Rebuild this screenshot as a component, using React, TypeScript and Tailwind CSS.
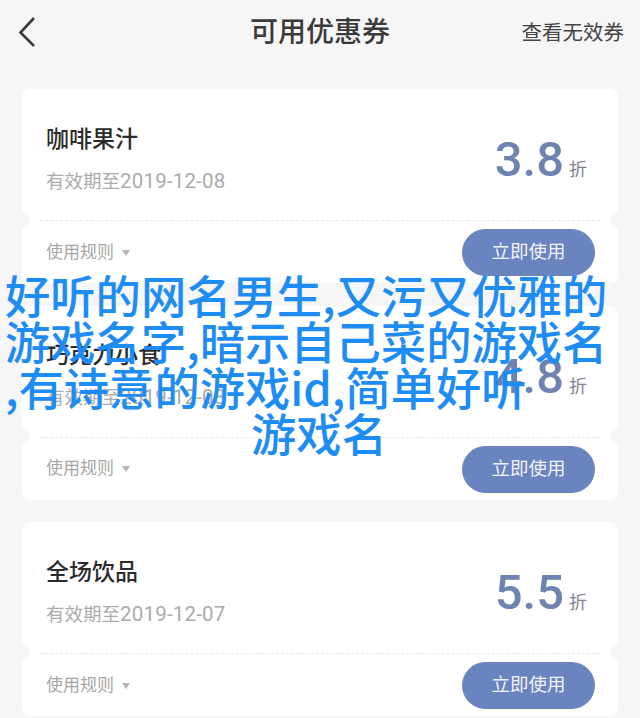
const FONT = "font-['Roboto','Noto_Sans_CJK_SC',sans-serif]";

const coupons = [
  { name: "咖啡果汁", date: "2019-12-08", discount: "3.8" },
  { name: "巧克力小食", date: "2019-12-08", discount: "4.8" },
  { name: "全场饮品", date: "2019-12-07", discount: "5.5" },
];

const CouponCard = ({ coupon }: { coupon: (typeof coupons)[number] }) => (
  <div className="relative h-[194px] rounded-lg bg-white">
    <div className="flex h-[131px] items-center justify-between pl-6 pr-[31px] pt-[10px]">
      <div>
        <div className="text-[23px] font-medium leading-[30px] text-[#2b2b2b]">{coupon.name}</div>
        <div className="mt-[13px] flex items-baseline text-[18.500px] leading-[26px] text-[#ababab]">
          有效期至<span className="text-[20.500px] tracking-[0.2px]">{coupon.date}</span>
        </div>
      </div>
      <div className="flex items-baseline gap-[5px]">
        <span className="text-[49px] font-medium leading-none text-[#6d84b0]">{coupon.discount}</span>
        <span className="text-[18px] leading-none text-[#7d828c]">折</span>
      </div>
    </div>

    {/* Tear line with the two notches */}
    <div className="mx-[18px] border-t border-dashed border-[#e8e8e8]" />
    <div className="absolute left-[-8px] top-[123px] h-4 w-4 rounded-full bg-[#f6f6f6]" />
    <div className="absolute right-[-8px] top-[123px] h-4 w-4 rounded-full bg-[#f6f6f6]" />

    <div className="flex items-center justify-between pl-6 pr-[23px] pt-2">
      <div className="flex items-center gap-[8px] text-[17px] text-[#a6a6a6]">
        <span>使用规则</span>
        <span className="h-0 w-0 border-x-[4px] border-t-[6px] border-x-transparent border-t-[#b5b5b5]" />
      </div>
      <button className="flex h-[47px] w-[133px] items-center justify-center rounded-full bg-[#6a84c0] pt-px text-[18.500px] text-[#f2f4fa]">
        立即使用
      </button>
    </div>
  </div>
);

export default function App() {
  return (
    <div className={`relative h-[718px] w-[640px] overflow-hidden bg-[#f6f6f6] ${FONT}`}>
      <header className="flex h-[66px] items-center justify-between pl-[18px] pr-4">
        <svg className="-mt-[2px]" width="18" height="32" viewBox="0 0 18 32" fill="none" stroke="#3c3c3c" strokeWidth="2.6">
          <path d="M16 2 2.500 16.500 16 30" />
        </svg>
        <h1 className="absolute left-0 right-0 text-center text-[28px] font-medium text-[#3a3a3a]">可用优惠券</h1>
        <span className="text-[20.500px] text-[#444444]">查看无效券</span>
      </header>

      <main className="mt-[23px] flex flex-col gap-[22.500px] px-[22px]">
        {coupons.map((coupon) => (
          <CouponCard key={coupon.name} coupon={coupon} />
        ))}
      </main>

      {/* Caption pasted over the screenshot */}
      <div className="absolute left-[5px] top-[271px] w-[628px] font-['Noto_Sans_CJK_SC',sans-serif] text-[45.300px] font-medium leading-[46px] text-[#1e8cf5]">
        <div className="whitespace-nowrap">好听的网名男生,又污又优雅的</div>
        <div className="whitespace-nowrap">游戏名字,暗示自己菜的游戏名</div>
        <div className="whitespace-nowrap">,有诗意的游戏id,简单好听</div>
        <div className="whitespace-nowrap text-center">游戏名</div>
      </div>
    </div>
  );
}
